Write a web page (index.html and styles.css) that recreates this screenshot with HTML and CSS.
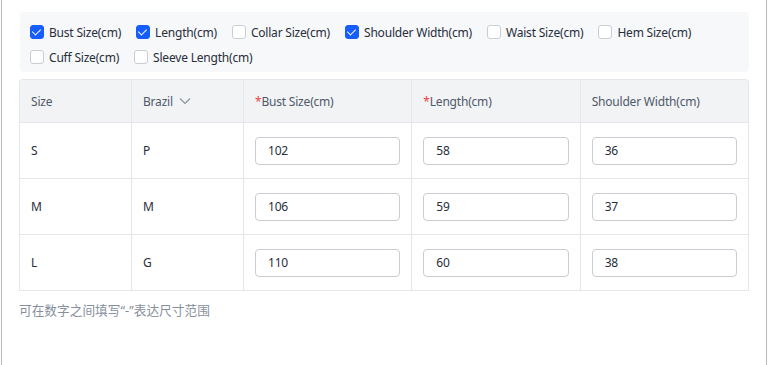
FILE: index.html
```html
<!DOCTYPE html>
<html lang="zh-CN">
<head>
    <meta charset="UTF-8">
    <meta name="viewport" content="width=device-width, initial-scale=1.0">
    <title>Size Chart</title>
    <link rel="stylesheet" href="styles.css">
</head>
<body>
    <div class="panel">
        <div class="options">
            <label class="option"><span class="box checked"></span>Bust Size(cm)</label>
            <label class="option"><span class="box checked"></span>Length(cm)</label>
            <label class="option"><span class="box"></span>Collar Size(cm)</label>
            <label class="option"><span class="box checked"></span>Shoulder Width(cm)</label>
            <label class="option"><span class="box"></span>Waist Size(cm)</label>
            <label class="option"><span class="box"></span>Hem Size(cm)</label>
            <label class="option"><span class="box"></span>Cuff Size(cm)</label>
            <label class="option"><span class="box"></span>Sleeve Length(cm)</label>
        </div>

        <table class="size-table">
            <colgroup>
                <col class="c-size">
                <col class="c-region">
                <col class="c-val">
                <col class="c-val">
                <col class="c-val">
            </colgroup>
            <thead>
                <tr>
                    <th>Size</th>
                    <th>
                        <span class="region">Brazil
                            <svg width="12" height="8" viewBox="0 0 12 8"><path d="M1 1.5 L6 6.5 L11 1.5" fill="none" stroke="#86909c" stroke-width="1.1"/></svg>
                        </span>
                    </th>
                    <th><span class="req">*</span>Bust Size(cm)</th>
                    <th><span class="req">*</span>Length(cm)</th>
                    <th>Shoulder Width(cm)</th>
                </tr>
            </thead>
            <tbody>
                <tr>
                    <td>S</td>
                    <td>P</td>
                    <td><input type="text" value="102"></td>
                    <td><input type="text" value="58"></td>
                    <td><input type="text" value="36"></td>
                </tr>
                <tr>
                    <td>M</td>
                    <td>M</td>
                    <td><input type="text" value="106"></td>
                    <td><input type="text" value="59"></td>
                    <td><input type="text" value="37"></td>
                </tr>
                <tr>
                    <td>L</td>
                    <td>G</td>
                    <td><input type="text" value="110"></td>
                    <td><input type="text" value="60"></td>
                    <td><input type="text" value="38"></td>
                </tr>
            </tbody>
        </table>

        <p class="tip">可在数字之间填写“-”表达尺寸范围</p>
    </div>
</body>
</html>
```

FILE: styles.css
```css
body {
    margin: 0;
    font-family: "Noto Sans", "Noto Sans CJK SC", sans-serif;
    font-size: 12px;
    letter-spacing: -0.2px;
    color: #1d2129;
    background-color: #fff;
}
.panel {
    margin: 0 1px;
    height: 365px;
    box-sizing: border-box;
    border-left: 1px solid #b8b8b8;
    border-right: 1px solid #b8b8b8;
    padding: 12px 17px 0 17px;
}
.options {
    display: flex;
    flex-wrap: wrap;
    column-gap: 15px;
    row-gap: 5px;
    padding: 10px 10px 5px 10px;
    background-color: #f7f8fa;
    border-radius: 4px;
    margin-left: 1px;
}
.option {
    display: flex;
    align-items: center;
    height: 20px;
    color: #272e3b;
}
.box {
    width: 12px;
    height: 12px;
    border: 1px solid #c9cdd4;
    border-radius: 3px;
    background-color: #fff;
    margin-right: 5px;
    position: relative;
}
.box.checked {
    background-color: #165dff;
    border-color: #165dff;
}
.box.checked::after {
    content: "";
    position: absolute;
    left: 3px;
    top: 1px;
    width: 4px;
    height: 7px;
    border: solid #fff;
    border-width: 0 1.5px 1.5px 0;
    transform: rotate(45deg);
}
.size-table {
    width: 100%;
    margin-top: 7px;
    border-collapse: separate;
    border-spacing: 0;
    table-layout: fixed;
    border-top: 1px solid #e5e6eb;
    border-left: 1px solid #e5e6eb;
    border-radius: 4px 4px 0 0;
}
.c-size, .c-region {
    width: 112px;
}
.size-table th,
.size-table td {
    border-right: 1px solid #e5e6eb;
    border-bottom: 1px solid #e5e6eb;
    padding: 0 11px;
    text-align: left;
}
.size-table th {
    height: 42px;
    background-color: #f2f3f5;
    font-weight: normal;
    color: #4e5969;
}
.size-table th:first-child {
    border-top-left-radius: 4px;
}
.size-table th:last-child {
    border-top-right-radius: 4px;
}
.size-table td {
    height: 55px;
    color: #272e3b;
}
.region {
    display: inline-flex;
    align-items: center;
    gap: 6px;
}
.req {
    color: #f53f3f;
}
.size-table input {
    width: 100%;
    height: 28px;
    box-sizing: border-box;
    border: 1px solid #c9cdd4;
    border-radius: 4px;
    padding: 0 12px;
    font-family: inherit;
    font-size: 12px;
    letter-spacing: -0.2px;
    color: #272e3b;
    outline: none;
}
.tip {
    margin: 9px 0 0;
    color: #86909c;
    font-size: 12.7px;
    letter-spacing: 0;
}
```
